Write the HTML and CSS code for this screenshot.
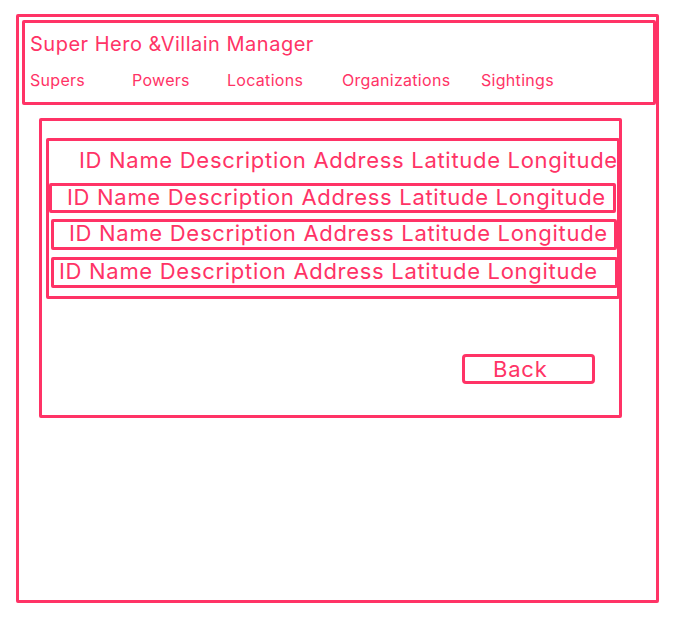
FILE: index.html
```html
<!DOCTYPE html>
<html>
<head>
<meta charset="utf-8">
<link rel="stylesheet" href="styles.css">
</head>
<body>
<div class="frame">
  <header class="header">
    <div class="title">Super Hero &amp;Villain Manager</div>
    <nav class="nav">
      <span class="nav-item supers">Supers</span>
      <span class="nav-item powers">Powers</span>
      <span class="nav-item locations">Locations</span>
      <span class="nav-item orgs">Organizations</span>
      <span class="nav-item sightings">Sightings</span>
    </nav>
  </header>
  <section class="content">
    <div class="table">
      <div class="thead">ID Name Description Address Latitude Longitude</div>
      <div class="row row1">ID Name Description Address Latitude Longitude</div>
      <div class="row row2">ID Name Description Address Latitude Longitude</div>
      <div class="row row3">ID Name Description Address Latitude Longitude</div>
    </div>
    <div class="back">Back</div>
  </section>
</div>
</body>
</html>
```

FILE: styles.css
```css
* { box-sizing: border-box; }
html, body { margin: 0; padding: 0; background: #fff; }
body {
  font-family: Inter, "Open Sans", sans-serif;
  color: #ff3366;
  width: 685px;
  height: 625px;
  overflow: hidden;
}
.frame {
  margin: 14px 0 0 16px;
  width: 643px;
  height: 589px;
  border: 3px solid #ff3366;
  border-radius: 2px;
  display: flex;
  flex-direction: column;
}
.header {
  margin: 3px 0 0 3px;
  width: 634px;
  height: 85px;
  border: 3px solid #ff3366;
  border-radius: 2px;
  padding: 9px 0 0 5px;
  display: flex;
  flex-direction: column;
}
.title {
  font-size: 20px;
  line-height: 24px;
  letter-spacing: 0.5px;
  white-space: nowrap;
}
.nav {
  margin-top: 14px;
  display: flex;
  font-size: 16px;
  line-height: 20px;
  letter-spacing: 0.3px;
}
.nav-item { white-space: nowrap; }
.supers { width: 102px; }
.powers { width: 95px; }
.locations { width: 115px; }
.orgs { width: 139px; }
.content {
  margin: 13px 0 0 20px;
  width: 583px;
  height: 300px;
  border: 3px solid #ff3366;
  border-radius: 2px;
  display: flex;
  flex-direction: column;
  align-items: flex-start;
}
.table {
  margin: 17px 0 0 4px;
  width: 574px;
  height: 161px;
  border: 3px solid #ff3366;
  border-radius: 2px;
  display: flex;
  flex-direction: column;
  align-items: flex-start;
}
.thead, .row {
  font-size: 22px;
  letter-spacing: 0.7px;
  white-space: nowrap;
  display: flex;
  align-items: center;
}
.thead {
  height: 42px;
  padding: 0 0 5px 30px;
}
.row {
  height: 30px;
  border: 3px solid #ff3366;
  border-radius: 2px;
  padding-bottom: 3px;
}
.row1 { width: 567px; padding-left: 15px; }
.row2 { width: 566px; height: 31px; margin: 6px 0 0 2px; padding-left: 15px; }
.row3 { width: 567px; height: 31px; margin: 7px 0 0 2px; padding-left: 5px; }
.back {
  margin: 55px 0 0 420px;
  width: 133px;
  height: 30px;
  border: 3px solid #ff3366;
  border-radius: 4px;
  font-size: 22px;
  letter-spacing: 0.8px;
  display: flex;
  align-items: center;
  padding-left: 28px;
}
```
